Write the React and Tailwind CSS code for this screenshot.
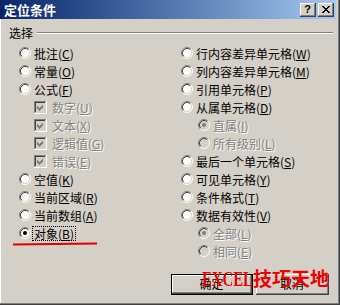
import React from "react";

const FONT = { fontFamily: '"Noto Sans CJK SC", "Liberation Sans", sans-serif' };

function Radio({ checked, disabled }) {
  return (
    <svg width="12" height="12" viewBox="0 0 12 12" className="shrink-0">
      <circle cx="6" cy="6" r="5" fill={disabled ? "#d4d0c8" : "#fff"} />
      <path d="M2.11 9.89 A5.5 5.5 0 0 1 9.89 2.11" stroke="#808080" fill="none" />
      <path d="M9.89 2.11 A5.5 5.5 0 0 1 2.11 9.89" stroke="#fff" fill="none" />
      <path d="M2.82 9.18 A4.5 4.5 0 0 1 9.18 2.82" stroke="#404040" fill="none" />
      <path d="M9.18 2.82 A4.5 4.5 0 0 1 2.82 9.18" stroke="#d4d0c8" fill="none" />
      {checked && <circle cx="6" cy="6" r="2" fill={disabled ? "#808080" : "#000"} />}
    </svg>
  );
}

function Check() {
  // disabled, checked
  return (
    <svg width="13" height="13" viewBox="0 0 13 13" className="shrink-0" shapeRendering="crispEdges">
      <rect x="0" y="0" width="13" height="13" fill="#fff" />
      <path d="M0.5 12 V0.5 H12" stroke="#808080" fill="none" />
      <path d="M1.5 11 V1.5 H11" stroke="#404040" fill="none" />
      <path d="M11.5 1 V11.5 H1" stroke="#d4d0c8" fill="none" />
      <rect x="2" y="2" width="9" height="9" fill="#d4d0c8" />
      <polygon points="3,5 5,7 9,3 9,6 5,10 3,8" fill="#808080" />
    </svg>
  );
}

function Label({ text, k, disabled, focus }) {
  return (
    <span
      className={`whitespace-nowrap text-[12px] leading-[13px] ${disabled ? "text-[#808080] [text-shadow:1px_1px_0_#fff]" : "text-black"} ${focus ? "border border-dotted border-black px-[1px]" : "border border-transparent px-[1px]"}`}
    >
      {text}(<span className="underline">{k}</span>)
    </span>
  );
}

function Row({ kind = "radio", indent = false, checked, disabled, focus, text, k }) {
  return (
    <div className={`h-[18px] flex items-center ${indent ? "pl-[17px]" : ""} ${kind === "check" ? "pl-[15px] gap-[3px]" : "gap-[1px]"}`}>
      {kind === "check" ? <Check /> : <Radio checked={checked} disabled={disabled} />}
      <Label text={text} k={k} disabled={disabled} focus={focus} />
    </div>
  );
}

function Raised({ className = "", children }) {
  return (
    <div className={`border-r border-b border-[#404040] ${className}`}>
      <div className="w-full h-full border-t border-l border-t-white border-l-white border-r border-b border-r-[#808080] border-b-[#808080] bg-[#d4d0c8] flex items-center justify-center">
        {children}
      </div>
    </div>
  );
}

export default function App() {
  const left = [
    { text: "批注", k: "C" },
    { text: "常量", k: "O" },
    { text: "公式", k: "F" },
    { kind: "check", text: "数字", k: "U", disabled: true },
    { kind: "check", text: "文本", k: "X", disabled: true },
    { kind: "check", text: "逻辑值", k: "G", disabled: true },
    { kind: "check", text: "错误", k: "E", disabled: true },
    { text: "空值", k: "K" },
    { text: "当前区域", k: "R" },
    { text: "当前数组", k: "A" },
    { text: "对象", k: "B", checked: true, focus: true },
  ];
  const right = [
    { text: "行内容差异单元格", k: "W" },
    { text: "列内容差异单元格", k: "M" },
    { text: "引用单元格", k: "P" },
    { text: "从属单元格", k: "D" },
    { indent: true, text: "直属", k: "I", checked: true, disabled: true },
    { indent: true, text: "所有级别", k: "L", disabled: true },
    { text: "最后一个单元格", k: "S" },
    { text: "可见单元格", k: "Y" },
    { text: "条件格式", k: "T" },
    { text: "数据有效性", k: "V" },
    { indent: true, text: "全部", k: "L", checked: true, disabled: true },
    { indent: true, text: "相同", k: "E", disabled: true },
  ];

  return (
    <div style={FONT} className="relative w-[340px] h-[305px] bg-[#d4d0c8] overflow-hidden border-r border-b border-[#404040]">
      <div className="h-full border-r border-b border-[#808080] flex flex-col">
        {/* title bar */}
        <div className="h-[19px] mr-[2px] flex items-center pl-[4px] pr-[2px] bg-gradient-to-r from-[#0a246a] to-[#a6caf0]">
          <span className="text-white font-bold text-[13px] leading-none">定位条件</span>
          <div className="ml-auto flex items-center gap-[2px]">
            <Raised className="w-[16px] h-[14px]">
              <span className="text-black font-bold text-[11px] leading-none" style={{ fontFamily: '"Liberation Sans", sans-serif' }}>?</span>
            </Raised>
            <Raised className="w-[16px] h-[14px]">
              <svg width="8" height="7" viewBox="0 0 8 7" shapeRendering="crispEdges">
                <path d="M0 0h2v1h-2zM6 0h2v1h-2zM1 1h2v1h-2zM5 1h2v1h-2zM2 2h4v1h-4zM3 3h2v1h-2zM2 4h4v1h-4zM1 5h2v1h-2zM5 5h2v1h-2zM0 6h2v1h-2zM6 6h2v1h-2z" fill="#000" />
              </svg>
            </Raised>
          </div>
        </div>

        {/* body */}
        <div className="flex-1 border-l border-l-white">
          <div className="mt-[7px] h-[14px] flex items-center pl-[8px] pr-[5px]">
            <span className="text-[12px] leading-none text-black">选择</span>
            <div className="flex-1 ml-[4px] h-[2px] border-t border-t-[#808080] border-b border-b-white" />
          </div>

          <div className="mt-[4px] grid grid-cols-[162px_1fr] pl-[18px]">
            <div className="flex flex-col">
              {left.map((r, i) => (
                <Row key={i} {...r} />
              ))}
            </div>
            <div className="flex flex-col">
              {right.map((r, i) => (
                <Row key={i} {...r} />
              ))}
            </div>
          </div>

          <div className="mt-[14px] flex pl-[170px] gap-[3px]">
            <div className="w-[82px] h-[21px] border border-black">
              <Raised className="w-full h-full">
                <span className="text-[12px] leading-none text-black">确定</span>
              </Raised>
            </div>
            <Raised className="w-[73px] h-[21px]">
              <span className="text-[12px] leading-none text-black">取消</span>
            </Raised>
          </div>
        </div>
      </div>

      {/* annotation overlays */}
      <div className="absolute left-[13px] top-[243px] w-[84px] h-[2px] bg-[#e00000] -rotate-[0.6deg]" />
      <div className="absolute left-[202px] top-[268px] text-[#f00000] font-bold leading-none whitespace-nowrap flex items-baseline">
        <span className="inline-block w-[51px] overflow-visible text-[20px]" style={{ fontFamily: '"Liberation Serif", serif' }}>
          <span className="inline-block origin-left scale-x-[0.74]">EXCEL</span>
        </span>
        <span className="text-[19px]">技巧天地</span>
      </div>
    </div>
  );
}
